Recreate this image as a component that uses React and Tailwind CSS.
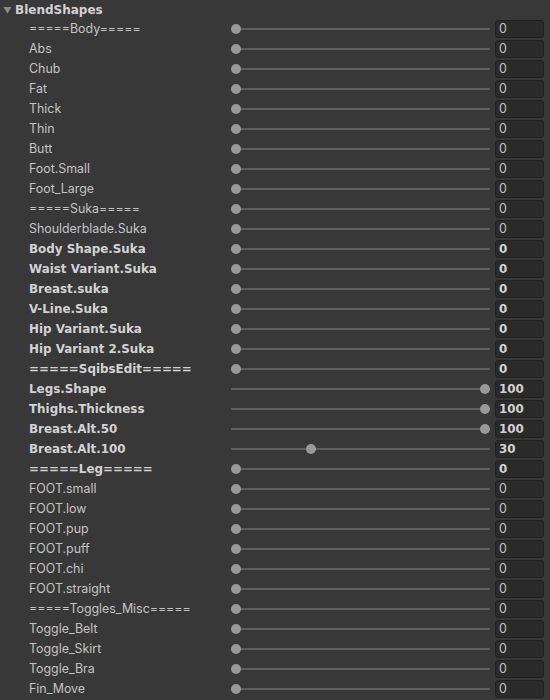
import React from "react";

const rows = [
  ["=====Body=====", 0, false],
  ["Abs", 0, false],
  ["Chub", 0, false],
  ["Fat", 0, false],
  ["Thick", 0, false],
  ["Thin", 0, false],
  ["Butt", 0, false],
  ["Foot.Small", 0, false],
  ["Foot_Large", 0, false],
  ["=====Suka=====", 0, false],
  ["Shoulderblade.Suka", 0, false],
  ["Body Shape.Suka", 0, true],
  ["Waist Variant.Suka", 0, true],
  ["Breast.suka", 0, true],
  ["V-Line.Suka", 0, true],
  ["Hip Variant.Suka", 0, true],
  ["Hip Variant 2.Suka", 0, true],
  ["=====SqibsEdit=====", 0, true],
  ["Legs.Shape", 100, true],
  ["Thighs.Thickness", 100, true],
  ["Breast.Alt.50", 100, true],
  ["Breast.Alt.100", 30, true],
  ["=====Leg=====", 0, true],
  ["FOOT.small", 0, false],
  ["FOOT.low", 0, false],
  ["FOOT.pup", 0, false],
  ["FOOT.puff", 0, false],
  ["FOOT.chi", 0, false],
  ["FOOT.straight", 0, false],
  ["=====Toggles_Misc=====", 0, false],
  ["Toggle_Belt", 0, false],
  ["Toggle_Skirt", 0, false],
  ["Toggle_Bra", 0, false],
  ["Fin_Move", 0, false],
];

const boldFont = "font-['DejaVu_Sans',sans-serif] font-bold text-[11.9px] text-[#d2d2d2] pt-[2px]";
const regularFont = "text-[12.4px] text-[#c4c4c4]";

const Slider = ({ value }) => (
  <div className="relative w-[259px] h-[20px] flex items-center">
    <div className="w-full h-[2px] bg-[#5e5e5e]" />
    <div
      className="absolute top-[5px] w-[10px] h-[10px] rounded-full bg-[#999999]"
      style={{ left: `${value * 2.49}px` }}
    />
  </div>
);

const Row = ({ label, value, bold }) => (
  <div className="flex items-center h-[20px]">
    <div className={`w-[231px] pl-[29px] leading-none whitespace-nowrap ${bold ? boldFont : regularFont}`}>
      {label}
    </div>
    <Slider value={value} />
    <div
      className={`ml-[5px] w-[49px] h-[18px] flex items-center pl-[3px] rounded-[3px] bg-[#2a2a2a] border border-[#212121] leading-none ${
        bold ? boldFont : regularFont
      }`}
    >
      {value}
    </div>
  </div>
);

const App = () => {
  return (
    <div
      className="w-[550px] h-[700px] bg-[#383838] overflow-hidden"
      style={{ fontFamily: "Inter, 'Noto Sans', sans-serif" }}
    >
      <div className="flex items-center h-[19px] pl-[3px] gap-[3px]">
        <svg width="9" height="8" viewBox="0 0 9 8">
          <polygon points="0.5,1 8.5,1 4.5,7.5" fill="#8c8c8c" />
        </svg>
        <span className="font-['DejaVu_Sans',sans-serif] text-[12px] font-bold text-[#d2d2d2] leading-none">
          BlendShapes
        </span>
      </div>
      {rows.map(([label, value, bold]) => (
        <Row key={label} label={label} value={value} bold={bold} />
      ))}
    </div>
  );
};

export default App;
